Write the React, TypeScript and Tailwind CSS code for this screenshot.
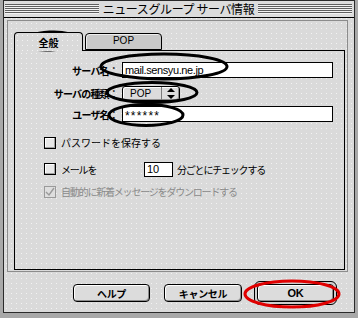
import React from "react";

const jp = "font-['Noto_Sans_CJK_JP',sans-serif]";
const speckle =
  "bg-[#dadada] bg-[radial-gradient(circle,#f3f3f3_0.7px,transparent_1px)] bg-size-[5px_5px]";

function Stripes() {
  return (
    <div className="flex-1 h-[10px] bg-[repeating-linear-gradient(to_bottom,#5e5e5e_0px,#5e5e5e_1px,#f2f2f2_1px,#f2f2f2_2px)]" />
  );
}

function Checkbox({ checked = false, disabled = false }: { checked?: boolean; disabled?: boolean }) {
  return (
    <div
      className={`w-[12px] h-[12px] border flex items-center justify-center ${
        disabled
          ? "border-[#9a9a9a] bg-[#dedede]"
          : "border-black bg-[#e8e8e8] shadow-[inset_-1px_-1px_0_#a0a0a0,inset_1px_1px_0_#ffffff]"
      }`}
    >
      {checked && (
        <svg width="10" height="10" viewBox="0 0 10 10">
          <polyline points="1,5 4,8 9,1" fill="none" stroke="#9a9a9a" strokeWidth="1.4" />
        </svg>
      )}
    </div>
  );
}

function Button({ label, className = "" }: { label: string; className?: string }) {
  return (
    <div
      className={`h-[18px] rounded-[4px] border border-black bg-[#dcdcdc] shadow-[inset_1px_1px_0_#ffffff,inset_-1px_-1px_0_#8c8c8c] flex items-center justify-center text-[10px] font-bold tracking-[-0.3px] ${className}`}
    >
      {label}
    </div>
  );
}

export default function App() {
  return (
    <div className={`relative w-[358px] h-[318px] overflow-hidden bg-[#a8a8a8] flex pl-[3px] pr-[3px] pb-[5px] ${jp}`}>
      {/* window */}
      <div className={`flex-1 flex flex-col border border-[#2a2a2a] ${speckle}`}>
        {/* title bar */}
        <div className="h-[17px] border-b border-black flex items-center pl-[1px] pr-[2px] bg-[#dcdcdc]">
          <Stripes />
          <div className="px-[4px] text-[12px] leading-[16px] tracking-[-0.4px] text-black">
            ニュースグループ サーバ情報
          </div>
          <Stripes />
        </div>

        {/* inset frame */}
        <div className="ml-[3px] mr-[6px] mt-[2px] border border-[#8c8c8c] pt-[11px] pl-[6px] pr-[2px] pb-[1px] flex flex-col">
          {/* tabs */}
          <div className="flex items-end h-[18px] gap-[2px]">
            <div className={`relative z-10 w-[69px] h-[19px] -mb-[1px] border border-b-0 border-black rounded-t-[4px] flex items-center justify-center text-[10px] font-bold ${speckle}`}>
              全般
            </div>
            <div className="w-[77px] h-[17px] border border-black rounded-t-[4px] bg-[#c9c9c9] shadow-[inset_1px_1px_0_#eeeeee] flex items-center justify-center text-[10px] font-['Liberation_Sans',sans-serif] pb-[3px]">
              POP
            </div>
          </div>

          {/* panel */}
          <div className="h-[220px] border border-black flex flex-col pt-[11px] pr-[11px]">
            <div className="flex items-center h-[16px]">
              <div className="w-[105px] pr-[2px] text-right text-[10px] font-bold tracking-[-0.8px]">サーバ名：</div>
              <div className="ml-[2px] flex-1 h-[16px] border border-black bg-white flex items-center pl-[2px] text-[11px] tracking-[-0.4px] font-['Liberation_Sans',sans-serif]">
                mail.sensyu.ne.jp
              </div>
            </div>

            <div className="flex items-center h-[15px] mt-[8px]">
              <div className="w-[105px] pr-[2px] text-right text-[10px] font-bold tracking-[-0.8px]">サーバの種類：</div>
              <div className="ml-[2px] w-[58px] h-[15px] border border-black rounded-[3px] bg-[#dcdcdc] shadow-[inset_1px_1px_0_#ffffff,inset_-1px_-1px_0_#8c8c8c] flex items-center">
                <div className="flex-1 pl-[7px] text-[10px] font-['Liberation_Sans',sans-serif]">POP</div>
                <div className="w-[1px] h-full bg-[#7a7a7a]" />
                <div className="w-[17px] flex items-center justify-center">
                  <svg width="8" height="11" viewBox="0 0 8 11">
                    <polygon points="4,0 8,4 0,4" fill="black" />
                    <polygon points="0,7 8,7 4,11" fill="black" />
                  </svg>
                </div>
              </div>
            </div>

            <div className="flex items-center h-[16px] mt-[5px]">
              <div className="w-[105px] pr-[2px] text-right text-[10px] font-bold tracking-[-0.8px]">ユーザ名：</div>
              <div className="ml-[2px] flex-1 h-[16px] border border-black bg-white flex items-center pl-[2px] pt-[3px] text-[12px] tracking-[1.2px] font-['Liberation_Sans',sans-serif]">
                ******
              </div>
            </div>

            <div className="flex items-center mt-[14px] ml-[29px] h-[13px]">
              <Checkbox />
              <div className="ml-[5px] text-[10px] tracking-[0px]">パスワードを保存する</div>
            </div>

            <div className="flex items-center mt-[12px] ml-[29px] h-[16px]">
              <Checkbox />
              <div className="ml-[5px] w-[83px] text-[10px] tracking-[-1.2px]">メールを</div>
              <div className="w-[29px] h-[15px] border border-black bg-white flex items-center pl-[2px] text-[11px] font-['Liberation_Sans',sans-serif]">
                10
              </div>
              <div className="ml-[4px] text-[10px] tracking-[-1.2px]">分ごとにチェックする</div>
            </div>

            <div className="flex items-center mt-[8px] ml-[29px] h-[13px]">
              <Checkbox checked disabled />
              <div className="ml-[5px] text-[10px] tracking-[-1.2px] text-[#8a8a8a]">
                自動的に新着メッセージをダウンロードする
              </div>
            </div>
          </div>
        </div>

        {/* buttons */}
        <div className="flex items-center justify-end mt-[9px] pr-[17px]">
          <Button label="ヘルプ" className="w-[77px]" />
          <Button label="キャンセル" className="w-[78px] ml-[14px]" />
          <div className="ml-[12px] w-[83px] h-[24px] p-[2px] border border-black rounded-[6px] bg-[#cfcfcf] flex">
            <Button label="OK" className="flex-1 h-[18px] font-['Liberation_Sans',sans-serif] text-[11px]" />
          </div>
        </div>
      </div>

      {/* hand-drawn annotation marks */}
      <svg className="absolute inset-0 pointer-events-none" width="358" height="318" viewBox="0 0 358 318">
        <ellipse cx="50" cy="41" rx="27" ry="9" fill="none" stroke="black" strokeWidth="3" transform="rotate(-3 50 41)" />
        <ellipse cx="164" cy="66.5" rx="63" ry="12.5" fill="none" stroke="black" strokeWidth="3" />
        <ellipse cx="152" cy="92.5" rx="45" ry="10" fill="none" stroke="black" strokeWidth="3" />
        <ellipse cx="146" cy="115" rx="37" ry="10.5" fill="none" stroke="black" strokeWidth="3" />
        <ellipse cx="292" cy="294" rx="47" ry="13" fill="none" stroke="#e00000" strokeWidth="3" />
      </svg>
    </div>
  );
}
